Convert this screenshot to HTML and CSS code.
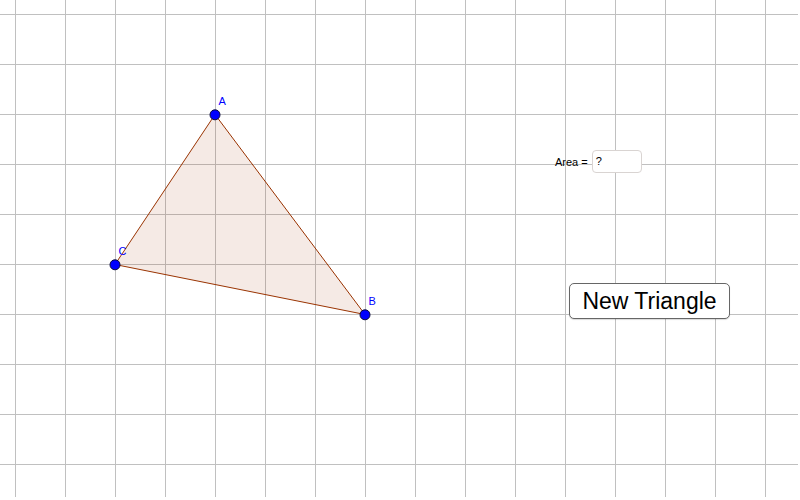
FILE: index.html
```html
<!DOCTYPE html>
<html>
<head>
<meta charset="utf-8">
<link rel="stylesheet" href="styles.css">
</head>
<body>
<div class="canvas">
  <svg class="drawing" width="798" height="497" viewBox="0 0 798 497">
    <polygon class="tri" points="215,114.5 365,314.5 115,264.5"/>
    <circle class="pt" cx="215" cy="114.8" r="5"/>
    <circle class="pt" cx="365" cy="314.8" r="5"/>
    <circle class="pt" cx="115" cy="264.8" r="5"/>
    <text class="lbl" x="218.5" y="105">A</text>
    <text class="lbl" x="368.5" y="305">B</text>
    <text class="lbl" x="118.5" y="255">C</text>
  </svg>
  <div class="area">
    <span class="area-label">Area =</span>
    <div class="area-box">?</div>
  </div>
  <button class="new-btn">New Triangle</button>
</div>
</body>
</html>
```
FILE: styles.css
```css
html, body {
  margin: 0;
  padding: 0;
  background: #ffffff;
}
.canvas {
  position: relative;
  width: 798px;
  height: 497px;
  background-color: #ffffff;
  background-image:
    linear-gradient(to right, #c0c0c0 1px, transparent 1px),
    linear-gradient(to bottom, #c0c0c0 1px, transparent 1px);
  background-size: 50px 50px, 50px 50px;
  background-position: 15px 0, 0 14px;
  font-family: "Liberation Sans", Arial, sans-serif;
  overflow: hidden;
}
.drawing {
  position: absolute;
  left: 0;
  top: 0;
}
.tri {
  fill: rgba(153, 51, 0, 0.1);
  stroke: #993300;
  stroke-width: 1;
}
.pt {
  fill: #0000ff;
  stroke: #0a0a3c;
  stroke-width: 1;
}
.lbl {
  fill: #0000ff;
  font-family: "Liberation Sans", Arial, sans-serif;
  font-size: 11px;
}
.area {
  position: absolute;
  left: 555px;
  top: 150px;
  display: flex;
  align-items: center;
  gap: 4px;
  height: 23px;
}
.area-label {
  font-size: 11px;
  color: #000;
}
.area-box {
  box-sizing: border-box;
  width: 50px;
  height: 23px;
  border: 1px solid #d9d4d2;
  border-radius: 4px;
  background: #fff;
  font-size: 11px;
  line-height: 21px;
  padding-left: 3px;
  color: #000;
}
.new-btn {
  position: absolute;
  left: 569px;
  top: 283px;
  box-sizing: border-box;
  width: 161px;
  height: 36px;
  border: 1px solid #666;
  border-radius: 5px;
  background: #fff;
  font-family: "Liberation Sans", Arial, sans-serif;
  font-size: 23px;
  color: #000;
  padding: 0;
  line-height: 34px;
  box-shadow: 0 1px 1px rgba(0,0,0,0.15);
}
```
